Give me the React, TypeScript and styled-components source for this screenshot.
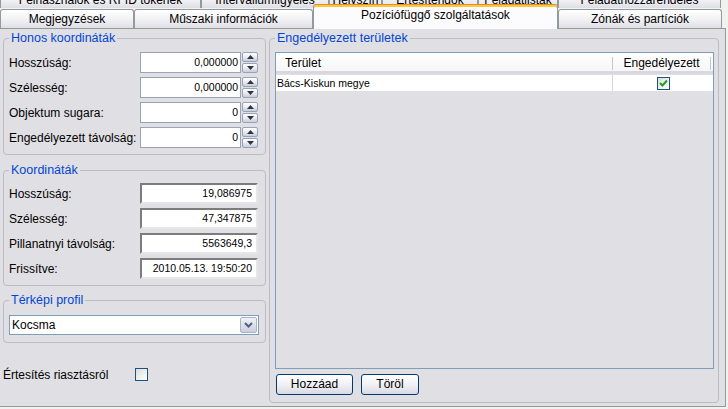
import React from "react";
import styled, { createGlobalStyle } from "styled-components";

const GlobalStyle = createGlobalStyle`
  html, body {
    margin: 0;
    padding: 0;
  }
  body {
    width: 728px;
    height: 409px;
    overflow: hidden;
    background: #f1f1ee;
    font-family: "Liberation Sans", Arial, sans-serif;
    font-size: 12px;
    color: #000;
  }
`;

const Window = styled.div`
  width: 728px;
  height: 409px;
  display: flex;
  flex-direction: column;
`;

// the back row of tabs is mostly hidden behind the top edge, as in the app
const TabRow = styled.div<{ $back?: boolean }>`
  display: flex;
  align-items: flex-end;
  height: ${(p) => (p.$back ? 8 : 20)}px;
  overflow: ${(p) => (p.$back ? "hidden" : "visible")};
  position: relative;
  z-index: ${(p) => (p.$back ? 0 : 1)};
`;

const Tab = styled.div<{ $w: number; $active?: boolean }>`
  box-sizing: border-box;
  flex: none;
  width: ${(p) => p.$w}px;
  height: ${(p) => (p.$active ? 25 : 19)}px;
  margin-bottom: ${(p) => (p.$active ? -1 : 0)}px;
  border: 1px solid #919b9c;
  border-bottom: none;
  border-top-color: ${(p) => (p.$active ? "#e68b2c" : "#919b9c")};
  border-radius: 3px 3px 0 0;
  box-shadow: ${(p) => (p.$active ? "inset 0 2px 0 #ffc83c" : "none")};
  background: ${(p) =>
    p.$active ? "#fcfcfe" : "linear-gradient(#ffffff, #f1f1f4 55%, #dedee6)"};
  padding-top: ${(p) => (p.$active ? 2 : 1)}px;
  line-height: 16px;
  text-align: center;
  white-space: nowrap;
  overflow: hidden;
`;

const BackTab = styled(Tab)`
  height: 18px;
`;

const Panel = styled.div`
  box-sizing: border-box;
  flex: none;
  width: 726px;
  height: 379px;
  border: 1px solid #919b9c;
  border-left: none;
  background: #e0dfe3;
  display: flex;
  padding: 2px 6px 3px 3px;
`;

const LeftColumn = styled.div`
  width: 263px;
  flex: none;
  display: flex;
  flex-direction: column;
`;

const GroupBox = styled.fieldset<{ $pt: number; $pb: number; $mt?: number }>`
  margin: ${(p) => p.$mt ?? 0}px 0 0 0;
  min-width: 0;
  border: 1px solid #bdbcc6;
  border-radius: 4px;
  padding: ${(p) => p.$pt}px 6px ${(p) => p.$pb}px 5px;
`;

const Legend = styled.legend`
  padding: 0 2px;
  line-height: 14px;
  font-size: 12.5px;
  color: #0046d5;
`;

const FieldList = styled.div`
  display: flex;
  flex-direction: column;
  gap: 4px;
`;

const FieldRow = styled.div`
  display: flex;
  align-items: center;
  height: 21px;
`;

const Label = styled.span`
  width: 131px;
  flex: none;
  white-space: nowrap;
`;

const ValueBox = styled.div<{ $sunken?: boolean; $w: number }>`
  box-sizing: border-box;
  width: ${(p) => p.$w}px;
  height: 21px;
  background: #fff;
  font-size: 10.5px;
  text-align: right;
  line-height: ${(p) => (p.$sunken ? 17 : 19)}px;
  padding-right: ${(p) => (p.$sunken ? 4 : 2)}px;
  border: ${(p) => (p.$sunken ? 2 : 1)}px solid;
  border-color: ${(p) =>
    p.$sunken ? "#7c7c7c #e6e6e6 #e6e6e6 #7c7c7c" : "#9aa3b4"};
  white-space: nowrap;
`;

const Spinner = styled.div`
  width: 16px;
  height: 21px;
  margin-left: 1px;
  display: flex;
  flex-direction: column;
  gap: 1px;
`;

const SpinButton = styled.div`
  box-sizing: border-box;
  flex: 1;
  display: flex;
  align-items: center;
  justify-content: center;
  border: 1px solid #97a3b9;
  border-radius: 2px;
  background: linear-gradient(#ffffff, #e9ebf2 50%, #c9cdda);
`;

const Arrow = ({ up }: { up?: boolean }) => (
  <svg width="7" height="4" viewBox="0 0 7 4">
    <path d={up ? "M0 4 L3.5 0 L7 4 Z" : "M0 0 L3.5 4 L7 0 Z"} fill="#2f3440" />
  </svg>
);

const SpinField = ({ label, value }: { label: string; value: string }) => (
  <FieldRow>
    <Label>{label}</Label>
    <ValueBox $w={101}>{value}</ValueBox>
    <Spinner>
      <SpinButton>
        <Arrow up />
      </SpinButton>
      <SpinButton>
        <Arrow />
      </SpinButton>
    </Spinner>
  </FieldRow>
);

const Select = styled.div`
  box-sizing: border-box;
  width: 250px;
  height: 20px;
  background: #fff;
  border: 1px solid #7f9db9;
  display: flex;
  align-items: center;
  padding: 0 1px 0 2px;
`;

const SelectText = styled.span`
  flex: 1;
`;

const DropButton = styled.div`
  box-sizing: border-box;
  width: 17px;
  height: 16px;
  border: 1px solid #a9b4cc;
  border-radius: 2px;
  background: linear-gradient(#f1f2f8, #c9cedd);
  display: flex;
  align-items: center;
  justify-content: center;
`;

const CheckRow = styled.div`
  display: flex;
  align-items: center;
  height: 13px;
  margin-top: 25px;
`;

const CheckLabel = styled.span`
  width: 132px;
  flex: none;
  white-space: nowrap;
`;

const CheckBox = styled.div`
  box-sizing: border-box;
  width: 13px;
  height: 13px;
  border: 1px solid #1c5180;
  background: linear-gradient(135deg, #dcdcd7, #ffffff);
  display: flex;
  align-items: center;
  justify-content: center;
`;

const RightGroup = styled(GroupBox)`
  flex: 1;
  margin-left: 3px;
  display: flex;
  flex-direction: column;
  padding-right: 4px;
`;

const Table = styled.div`
  flex: 1;
  border: 1px solid #7f9db9;
  background: #e0dfe3;
  display: flex;
  flex-direction: column;
`;

const HeaderRow = styled.div`
  display: flex;
  align-items: center;
  height: 18px;
  background: linear-gradient(#ffffff, #f6f6f8);
  border-bottom: 3px solid #d8d8de;
`;

const HeaderCell = styled.div<{ $w: number; $center?: boolean }>`
  box-sizing: border-box;
  width: ${(p) => p.$w}px;
  height: 13px;
  line-height: 13px;
  margin-top: 3px;
  padding-left: ${(p) => (p.$center ? 0 : 9)}px;
  text-align: ${(p) => (p.$center ? "center" : "left")};
  border-right: 1px solid #c5c5cb;
`;

const DataRow = styled.div`
  display: flex;
  height: 16px;
  margin-top: 1px;
  background: #fff;
  font-size: 10.5px;
`;

const DataCell = styled.div<{ $w?: number; $center?: boolean }>`
  box-sizing: border-box;
  width: ${(p) => (p.$w ? `${p.$w}px` : "auto")};
  flex: ${(p) => (p.$w ? "none" : 1)};
  display: flex;
  align-items: center;
  justify-content: ${(p) => (p.$center ? "center" : "flex-start")};
  padding-left: ${(p) => (p.$center ? 0 : 1)}px;
  border-right: ${(p) => (p.$w ? "1px solid #d6d6da" : "none")};
`;

const ButtonRow = styled.div`
  display: flex;
  gap: 8px;
  margin: 5px 0 0 1px;
`;

const Button = styled.div<{ $w: number }>`
  box-sizing: border-box;
  width: ${(p) => p.$w}px;
  height: 21px;
  border: 1px solid #003c74;
  border-radius: 3px;
  background: linear-gradient(#ffffff, #f1f1f5 50%, #d9d9e3);
  text-align: center;
  line-height: 19px;
`;

const backTabs = [
  { label: "Felhasználók és RFID tokenek", width: 201 },
  { label: "Intervallumfigyelés", width: 128 },
  { label: "Helyszín", width: 53 },
  { label: "Értesítendők", width: 96 },
  { label: "Feladatlisták", width: 80 },
  { label: "Feladathozzárendelés", width: 163 },
];

const frontTabs = [
  { label: "Megjegyzések", width: 134 },
  { label: "Műszaki információk", width: 179 },
  { label: "Pozíciófüggő szolgáltatások", width: 245, active: true },
  { label: "Zónák és partíciók", width: 164 },
];

const coords = [
  { label: "Hosszúság:", value: "19,086975" },
  { label: "Szélesség:", value: "47,347875" },
  { label: "Pillanatnyi távolság:", value: "5563649,3" },
  { label: "Frissítve:", value: "2010.05.13. 19:50:20" },
];

const App = () => {
  return (
    <>
      <GlobalStyle />
      <Window>
        <TabRow $back>
          {backTabs.map((t) => (
            <BackTab key={t.label} $w={t.width}>
              {t.label}
            </BackTab>
          ))}
        </TabRow>
        <TabRow>
          {frontTabs.map((t) => (
            <Tab key={t.label} $w={t.width} $active={t.active}>
              {t.label}
            </Tab>
          ))}
        </TabRow>

        <Panel>
          <LeftColumn>
            <GroupBox $pt={7} $pb={6}>
              <Legend>Honos koordináták</Legend>
              <FieldList>
                <SpinField label="Hosszúság:" value="0,000000" />
                <SpinField label="Szélesség:" value="0,000000" />
                <SpinField label="Objektum sugara:" value="0" />
                <SpinField label="Engedélyezett távolság:" value="0" />
              </FieldList>
            </GroupBox>

            <GroupBox $pt={6} $pb={6} $mt={8}>
              <Legend>Koordináták</Legend>
              <FieldList>
                {coords.map((c) => (
                  <FieldRow key={c.label}>
                    <Label>{c.label}</Label>
                    <ValueBox $sunken $w={118}>
                      {c.value}
                    </ValueBox>
                  </FieldRow>
                ))}
              </FieldList>
            </GroupBox>

            <GroupBox $pt={8} $pb={7} $mt={7}>
              <Legend>Térképi profil</Legend>
              <Select>
                <SelectText>Kocsma</SelectText>
                <DropButton>
                  <svg width="9" height="6" viewBox="0 0 9 6">
                    <path
                      d="M1 1 L4.5 4.5 L8 1"
                      fill="none"
                      stroke="#4d6185"
                      strokeWidth="2"
                    />
                  </svg>
                </DropButton>
              </Select>
            </GroupBox>

            <CheckRow>
              <CheckLabel>Értesítés riasztásról</CheckLabel>
              <CheckBox />
            </CheckRow>
          </LeftColumn>

          <RightGroup $pt={7} $pb={7}>
            <Legend>Engedélyezett területek</Legend>
            <Table>
              <HeaderRow>
                <HeaderCell $w={337}>Terület</HeaderCell>
                <HeaderCell $w={98} $center>
                  Engedélyezett
                </HeaderCell>
              </HeaderRow>
              <DataRow>
                <DataCell $w={337}>Bács-Kiskun megye</DataCell>
                <DataCell $center>
                  <CheckBox>
                    <svg width="9" height="8" viewBox="0 0 9 8">
                      <path
                        d="M1 4 L3.5 6.5 L8 1.5"
                        fill="none"
                        stroke="#21a121"
                        strokeWidth="2"
                      />
                    </svg>
                  </CheckBox>
                </DataCell>
              </DataRow>
            </Table>
            <ButtonRow>
              <Button $w={77}>Hozzáad</Button>
              <Button $w={58}>Töröl</Button>
            </ButtonRow>
          </RightGroup>
        </Panel>
      </Window>
    </>
  );
};

export default App;
